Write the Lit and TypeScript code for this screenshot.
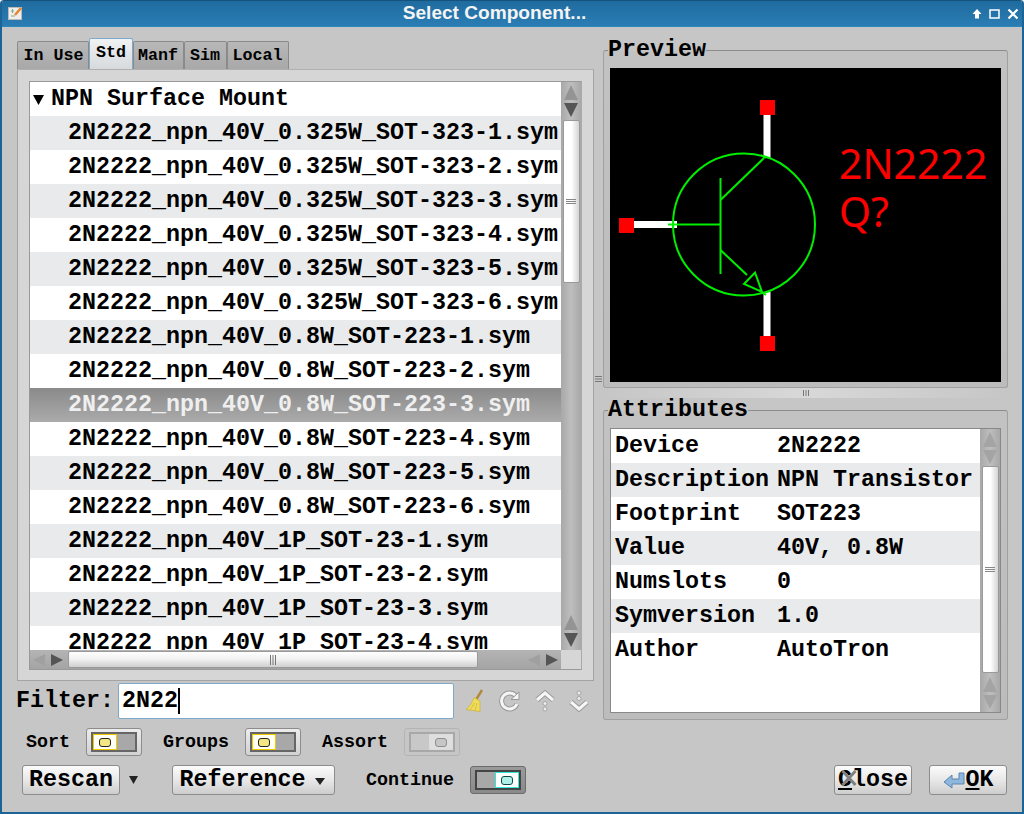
import { LitElement, html, css, svg } from 'lit';
import { customElement } from 'lit/decorators.js';

const ROWS = [
  ...[1, 2, 3, 4, 5, 6].map((n) => `2N2222_npn_40V_0.325W_SOT-323-${n}.sym`),
  ...[1, 2, 3, 4, 5, 6].map((n) => `2N2222_npn_40V_0.8W_SOT-223-${n}.sym`),
  ...[1, 2, 3, 4].map((n) => `2N2222_npn_40V_1P_SOT-23-${n}.sym`),
];

const ATTRS = [
  ['Device', '2N2222'],
  ['Description', 'NPN Transistor'],
  ['Footprint', 'SOT223'],
  ['Value', '40V, 0.8W'],
  ['Numslots', '0'],
  ['Symversion', '1.0'],
  ['Author', 'AutoTron'],
];

const TABS = ['In Use', 'Std', 'Manf', 'Sim', 'Local'];

// pair of scroll arrows, horizontal or vertical
const arrows = (dir: 'v' | 'h', first: string, second: string) =>
  dir === 'v'
    ? html`<svg width="20" height="34" viewBox="0 0 20 34">
        <path d="M10 1 L17 16 H3 Z" fill=${first} />
        <path d="M3 19 H17 L10 33 Z" fill=${second} />
      </svg>`
    : html`<svg width="36" height="18" viewBox="0 0 36 18">
        <path d="M3 9 L15 3 V15 Z" fill=${first} />
        <path d="M21 3 L33 9 L21 15 Z" fill=${second} />
      </svg>`;

const gripV = html`<svg width="12" height="6" viewBox="0 0 12 6">
  <path d="M1 .5 H11 M1 2.5 H11 M1 4.5 H11" stroke="#888" fill="none" />
</svg>`;
const gripH = html`<svg width="8" height="10" viewBox="0 0 8 10">
  <path d="M1.5 0 V10 M4 0 V10 M6.5 0 V10" stroke="#777" fill="none" />
</svg>`;
const gripSplitH = html`<svg width="8" height="6" viewBox="0 0 8 6">
  <path d="M1.5 0 V6 M4 0 V6 M6.5 0 V6" stroke="#777" fill="none" />
</svg>`;
const gripSplitV = html`<svg width="8" height="10" viewBox="0 0 8 10">
  <path d="M0 2.500 H7 M0 5 H7 M0 7.500 H7" stroke="#777" fill="none" />
</svg>`;

const broom = html`<svg width="20" height="24" viewBox="0 0 20 24">
  <path d="M17 1 L11.5 10" stroke="#b08a3a" stroke-width="2.4" fill="none" />
  <path d="M9 8.500 L15 12 L15 22.500 L1 20.500 C4.500 18 7 14 9 8.500 Z" fill="#f0dc5c" stroke="#cdb02e" stroke-width=".7" />
  <path d="M5.500 20.500 L9.500 14 M10 21.500 L12 14" stroke="#cdb02e" stroke-width=".7" />
</svg>`;
const refresh = html`<svg width="22" height="22" viewBox="0 0 22 22">
  <path d="M16.500 5.500 A8 8 0 1 0 18 14" fill="none" stroke="#999" stroke-width="5" />
  <path d="M16.500 5.500 A8 8 0 1 0 18 14" fill="none" stroke="#f4f4f4" stroke-width="3" />
  <path d="M12 9.500 H20 V2 Z" fill="#f4f4f4" stroke="#999" />
</svg>`;
const upArrow = html`<svg width="20" height="24" viewBox="0 0 20 24">
  <path d="M2 11 L10 4 L18 11" fill="none" stroke="#999" stroke-width="5" />
  <path d="M2 11 L10 4 L18 11" fill="none" stroke="#f6f6f6" stroke-width="3" />
  <circle cx="10" cy="14.500" r="2" fill="#eee" stroke="#999" stroke-width=".8" />
  <circle cx="10" cy="20" r="2" fill="#eee" stroke="#999" stroke-width=".8" />
</svg>`;
const downArrow = html`<svg width="20" height="24" viewBox="0 0 20 24">
  <path d="M2 13 L10 20 L18 13" fill="none" stroke="#999" stroke-width="5" />
  <path d="M2 13 L10 20 L18 13" fill="none" stroke="#f6f6f6" stroke-width="3" />
  <circle cx="10" cy="4" r="2" fill="#eee" stroke="#999" stroke-width=".8" />
  <circle cx="10" cy="9.500" r="2" fill="#eee" stroke="#999" stroke-width=".8" />
</svg>`;

const transistor = svg`
  <rect x="153.500" y="46" width="7" height="44" fill="#fff" />
  <rect x="153.500" y="224" width="7" height="45" fill="#fff" />
  <rect x="23" y="153" width="44" height="7" fill="#fff" />
  <rect x="150" y="32" width="15" height="15" fill="#f00" />
  <rect x="150" y="268" width="15" height="15" fill="#f00" />
  <rect x="9" y="150" width="15" height="15" fill="#f00" />
  <g fill="none" stroke="#0e0" stroke-width="2">
    <circle cx="134" cy="156.500" r="71" />
    <path d="M110.500 110 V206" />
    <path d="M58 156.500 H110.500" />
    <path d="M63 153 V160" />
    <path d="M110.500 132 L154 90" />
    <path d="M151 87 L156 90" />
    <path d="M110.500 182 L137 207" />
    <path d="M134 216 L145 204.500 L152 224 Z" />
    <path d="M149 222 L156 227" />
  </g>
  <text x="229" y="111" class="sym">2N2222</text>
  <text x="229" y="159" class="sym">Q?</text>
`;

@customElement('app-root')
export class AppRoot extends LitElement {
  static styles = css`
    :host {
      display: block;
      width: 1024px;
      height: 814px;
      font-family: 'Liberation Mono', monospace;
      font-weight: bold;
      font-size: 23.33px;
      color: #000;
    }
    .window {
      box-sizing: border-box;
      width: 1024px;
      height: 814px;
      display: flex;
      flex-direction: column;
      background: #c6c6c6;
      border: 2px solid #1c6496;
      border-top: none;
      border-radius: 4px 4px 0 0;
      overflow: hidden;
    }
    .title {
      height: 27px;
      flex: none;
      display: flex;
      align-items: center;
      padding: 0 5px 0 8px;
      background: linear-gradient(#1f6b9f, #2a7db3);
      border-top: 1px solid #15537f;
      box-sizing: border-box;
      color: #f4f4f4;
      font-family: 'Liberation Sans', sans-serif;
      font-size: 19.1px;
      margin: 0 -2px;
      border-bottom: 1px solid #2f86bd;
    }
    .title .name {
      flex: 1;
      text-align: center;
      padding-right: 5px;
      margin-top: -1px;
    }
    .title .ctrls {
      display: flex;
      gap: 6px;
      align-items: center;
    }
    .main {
      display: flex;
      padding: 11px 14px 0 15px;
      height: 682px;
      box-sizing: content-box;
      flex: none;
    }
    .left {
      width: 577px;
      display: flex;
      flex-direction: column;
    }
    .tabs {
      display: flex;
      align-items: flex-end;
      height: 31px;
      font-size: 16.67px;
      line-height: 1;
    }
    .tab {
      box-sizing: border-box;
      height: 28px;
      display: flex;
      align-items: center;
      justify-content: center;
      padding: 2px 1px 0 0;
      background: linear-gradient(#b8b8b8, #a8a8a8);
      border: 1px solid #8a8a8a;
      border-bottom: none;
      border-radius: 2px 2px 0 0;
    }
    .tab:first-child {
      padding: 2px 0 0 1px;
    }
    .tab.on {
      height: 31px;
      background: linear-gradient(#f0f2f3, #d6dadd);
      border: 1px solid #7ea9c9;
      border-bottom: none;
      padding: 0 0 2px;
    }
    .pane {
      box-sizing: border-box;
      height: 612px;
      padding: 11px 11px 11px 11px;
      background: #d6d6d6;
      border: 1px solid #a4a4a4;
      border-top: 1px solid #b0b0b0;
    }
    .listbox {
      box-sizing: border-box;
      height: 589px;
      display: grid;
      grid-template-columns: 1fr 20px;
      grid-template-rows: 1fr 19px;
      border: 1px solid #999;
      border-right-color: #aaa;
    }
    .list {
      overflow: hidden;
      background: #fff;
      min-height: 0;
    }
    .row {
      height: 34px;
      line-height: 34px;
      padding-left: 38px;
      white-space: pre;
    }
    .row.head {
      padding-left: 3px;
      display: flex;
      align-items: center;
      gap: 7px;
    }
    .row.alt {
      background: #e9eaeb;
    }
    .row.sel {
      background: linear-gradient(#8a8a8a, #ababab);
      color: #efefef;
    }
    .vbar {
      display: flex;
      flex-direction: column;
      align-items: center;
      background: linear-gradient(90deg, #a8a8a8, #bebebe 50%, #a8a8a8);
      padding: 2px 0;
      box-sizing: border-box;
    }
    .vbar .thumb {
      box-sizing: border-box;
      width: 17px;
      margin: 2px 0;
      flex: none;
      display: flex;
      align-items: center;
      justify-content: center;
      background: linear-gradient(90deg, #fff, #fff 50%, #d4d4d4);
      border: 1px solid #9a9a9a;
      border-radius: 2px;
    }
    .vbar .rest {
      flex: 1;
    }
    .hbar {
      display: flex;
      align-items: center;
      background: linear-gradient(#b4b4b4, #a4a4a4);
    }
    .hbar .thumb {
      box-sizing: border-box;
      width: 410px;
      height: 17px;
      margin-left: 2px;
      display: flex;
      align-items: center;
      justify-content: center;
      background: linear-gradient(#fff, #f0f0f0 50%, #cfcfcf);
      border: 1px solid #9a9a9a;
      border-radius: 2px;
    }
    .hbar .rest {
      flex: 1;
    }
    .corner {
      background: #d6d6d6;
    }
    .filter {
      display: flex;
      align-items: center;
      margin-top: 2px;
      margin-left: -1px;
      height: 36px;
    }
    .filter label {
      width: 102px;
      flex: none;
    }
    .filter .input {
      box-sizing: border-box;
      width: 336px;
      height: 36px;
      background: #fff;
      border: 1px solid #7ea9c9;
      border-radius: 2px;
      padding-left: 3px;
      line-height: 34px;
      display: flex;
    }
    .caret {
      width: 1.5px;
      height: 26px;
      margin-top: 4px;
      background: #000;
    }
    .icons {
      display: flex;
      align-items: center;
      gap: 14px;
      margin-left: 11px;
    }
    .split-v {
      width: 9px;
      flex: none;
      display: flex;
      align-items: center;
      justify-content: center;
    }
    .right {
      width: 405px;
      display: flex;
      flex-direction: column;
    }
    fieldset {
      margin: 0;
      min-width: 0;
      padding: 0 6px;
      border: 1px solid #a0a0a0;
      border-top-color: #8c8c8c;
      border-radius: 3px;
      background: linear-gradient(#c2c2c2, #bcbcbc);
    }
    legend {
      margin-left: -2px;
      padding: 0;
      height: 24px;
      line-height: 24px;
      color: #000;
    }
    .canvas {
      margin-top: 6px;
      width: 391px;
      height: 314px;
      margin-bottom: 5px;
      background: #000;
      display: block;
    }
    .sym {
      font-family: 'Noto Sans', sans-serif;
      font-weight: normal;
      font-size: 41px;
      fill: #f00;
    }
    .split-h {
      height: 10px;
      flex: none;
      display: flex;
      align-items: center;
      justify-content: center;
      background: linear-gradient(90deg, #c6c6c6, #d8d8d8 50%, #c6c6c6);
    }
    .attrs {
      flex: 1;
      margin-top: 0;
    }
    .attr-box {
      box-sizing: border-box;
      margin-top: 6px;
      height: 285px;
      display: flex;
      border: 1px solid #888;
      background: #fff;
    }
    .attr-list {
      flex: 1;
      min-width: 0;
    }
    .attr {
      height: 34px;
      line-height: 34px;
      display: grid;
      grid-template-columns: 162px 1fr;
      padding-left: 4px;
      white-space: pre;
    }
    .attr.alt {
      background: #e9eaeb;
    }
    .attr-box .vbar {
      width: 20px;
      flex: none;
    }
    .toggles {
      display: flex;
      align-items: center;
      height: 28px;
      margin: 8px 0 0 24px;
      font-size: 18.33px;
    }
    .tog {
      box-sizing: border-box;
      width: 56px;
      height: 28px;
      border: 1px solid #8c8c8c;
      border-radius: 3px;
      background: linear-gradient(#ececec, #d2d2d2);
      padding: 3px 4px;
      flex: none;
    }
    .tog .inner {
      box-sizing: border-box;
      height: 20px;
      display: flex;
      border: 2px solid #666;
      background: #a8a8a8;
    }
    .tog .knob {
      width: 24px;
      box-sizing: border-box;
      display: flex;
      align-items: center;
      justify-content: center;
      background: #fffff4;
      border: 1px solid #f2c900;
    }
    .tog .knob i {
      display: block;
      width: 12px;
      height: 9px;
      box-sizing: border-box;
      border: 1.5px solid #222;
      border-radius: 3px;
      background: #f5e684;
    }
    .tog .gap {
      flex: 1;
    }
    .tog.cyan {
      background: linear-gradient(#9a9a9a, #8a8a8a);
      border-color: #6c6c6c;
    }
    .tog.cyan .inner {
      border-color: #444;
    }
    .tog.cyan .knob {
      border-color: #2fe8d8;
      background: #fff;
    }
    .tog.cyan .knob i {
      border-color: #0c4a4a;
      background: #aef0e8;
    }
    .tog.off {
      background: #c6c6c6;
      border-color: #b4b4b4;
    }
    .tog.off .inner {
      border-color: #a8a8a8;
      background: #c8c8c8;
    }
    .tog.off .knob {
      border-color: #dcdcdc;
      background: #dedede;
    }
    .tog.off .knob i {
      border-color: #8e8e8e;
      background: #c6c6c6;
    }
    .actions {
      display: flex;
      align-items: center;
      height: 30px;
      margin: 9px 0 0 20px;
    }
    .btn {
      box-sizing: border-box;
      height: 30px;
      display: flex;
      align-items: center;
      justify-content: center;
      padding-top: 2px;
      background: linear-gradient(#fbfbfb, #e8e8e8 50%, #cdcdcd);
      border: 1px solid #8c8c8c;
      border-radius: 3px;
      line-height: 1;
    }
    .caret-down {
      flex: none;
    }
    .small {
      font-size: 18.33px;
    }
    .mn {
      position: relative;
      text-decoration: underline;
      text-decoration-thickness: 2px;
      text-underline-offset: 2px;
    }
    .over {
      position: absolute;
      left: 3px;
      top: 2px;
    }
  `;

  private tog(kind: string) {
    const knob = html`<div class="knob"><i></i></div>`;
    const gap = html`<div class="gap"></div>`;
    return html`<div class="tog ${kind}">
      <div class="inner">${kind === 'yellow' ? html`${knob}${gap}` : html`${gap}${knob}`}</div>
    </div>`;
  }

  render() {
    return html`
      <div class="window">
        <div class="title">
          <svg width="15" height="15" viewBox="0 0 15 15">
            <rect x=".5" y="1.500" width="13" height="12" fill="#eee" stroke="#bbb" />
            <path d="M3 5 H6 M4.500 3 V7 M3 10 H7" stroke="#8a8" fill="none" />
            <path d="M7 9 L13 2" stroke="#e8862a" stroke-width="2.500" />
          </svg>
          <div class="name">Select Component...</div>
          <div class="ctrls">
            <svg width="12" height="12" viewBox="0 0 12 12">
              <path d="M6 1 L10.500 6 H8 V10.500 H4 V6 H1.500 Z" fill="#fff" />
            </svg>
            <svg width="12" height="12" viewBox="0 0 12 12">
              <rect x="1" y="2" width="9" height="8" fill="none" stroke="#fff" stroke-width="1.500" />
            </svg>
            <svg width="12" height="12" viewBox="0 0 12 12">
              <path d="M1.500 1.500 L10.500 10.500 M10.500 1.500 L1.500 10.500" stroke="#fff" stroke-width="2.200" />
            </svg>
          </div>
        </div>

        <div class="main">
          <div class="left">
            <div class="tabs">
              ${TABS.map(
                (t, i) => html`<div
                  class="tab ${i === 1 ? 'on' : ''}"
                  style="width:${[72, 44, 51, 43, 62][i]}px"
                >
                  ${t}
                </div>`,
              )}
            </div>
            <div class="pane">
              <div class="listbox">
                <div class="list">
                  <div class="row head">
                    <svg width="11" height="11" viewBox="0 0 11 11"><path d="M0 1 H11 L5.500 11 Z" fill="#000" /></svg>
                    <span>NPN Surface Mount</span>
                  </div>
                  ${ROWS.map(
                    (r, i) => html`<div class="row ${i === 8 ? 'sel' : i % 2 === 0 ? 'alt' : ''}">${r}</div>`,
                  )}
                </div>
                <div class="vbar">
                  ${arrows('v', '#949494', '#555')}
                  <div class="thumb" style="height:163px">${gripV}</div>
                  <div class="rest"></div>
                  ${arrows('v', '#949494', '#555')}
                </div>
                <div class="hbar">
                  ${arrows('h', '#a0a0a0', '#555')}
                  <div class="thumb">${gripH}</div>
                  <div class="rest"></div>
                  ${arrows('h', '#a0a0a0', '#555')}
                </div>
                <div class="corner"></div>
              </div>
            </div>
            <div class="filter">
              <label>Filter:</label>
              <div class="input">2N22<span class="caret"></span></div>
              <div class="icons">${broom}${refresh}${upArrow}${downArrow}</div>
            </div>
          </div>

          <div class="split-v">${gripSplitV}</div>

          <div class="right">
            <fieldset>
              <legend>Preview</legend>
              <svg class="canvas" width="391" height="314" viewBox="0 0 391 314">${transistor}</svg>
            </fieldset>
            <div class="split-h">${gripSplitH}</div>
            <fieldset class="attrs">
              <legend>Attributes</legend>
              <div class="attr-box">
                <div class="attr-list">
                  ${ATTRS.map(
                    ([k, v], i) => html`<div class="attr ${i % 2 ? 'alt' : ''}"><span>${k}</span><span>${v}</span></div>`,
                  )}
                </div>
                <div class="vbar">
                  ${arrows('v', '#a4a4a4', '#a4a4a4')}
                  <div class="thumb" style="flex:1;margin:1px 0 3px">${gripV}</div>
                  ${arrows('v', '#a4a4a4', '#a4a4a4')}
                </div>
              </div>
            </fieldset>
          </div>
        </div>

        <div class="toggles small">
          <span style="width:60px">Sort</span>
          ${this.tog('yellow')}
          <span style="width:82px;margin-left:21px">Groups</span>
          ${this.tog('yellow')}
          <span style="width:82px;margin-left:21px">Assort</span>
          ${this.tog('off')}
        </div>

        <div class="actions">
          <div class="btn" style="width:98px">Rescan</div>
          <svg class="caret-down" style="margin:0 0 0 8px" width="11" height="8" viewBox="0 0 11 8"><path d="M1 0 H10 L5.500 8 Z" fill="#222" /></svg>
          <div class="btn" style="width:163px;margin-left:33px;gap:9px;padding-right:3px">
            <span>Reference</span>
            <svg width="10" height="7" viewBox="0 0 10 7"><path d="M0 0 H10 L5 7 Z" fill="#222" /></svg>
          </div>
          <span class="small" style="margin-left:31px;width:104px">Continue</span>
          ${this.tog('cyan')}
          <div style="flex:1"></div>
          <div class="btn" style="width:78px">
            <span><span class="mn">C<svg class="over" width="16" height="18" viewBox="0 0 16 18">
              <path d="M1.500 16 L14.500 2 M1.500 2 L14.500 16" stroke="#808080" stroke-width="3" />
            </svg></span>lose</span>
          </div>
          <div class="btn" style="width:78px;margin:0 15px 0 17px;gap:1px">
            <svg width="22" height="20" viewBox="0 0 22 20">
              <path d="M1 11 L9 4 V8 H16 V2 H21 V13 H9 V17 Z" fill="#8fb6dc" stroke="#5b86b0" />
            </svg>
            <span><span class="mn">O</span>K</span>
          </div>
        </div>
      </div>
    `;
  }
}
